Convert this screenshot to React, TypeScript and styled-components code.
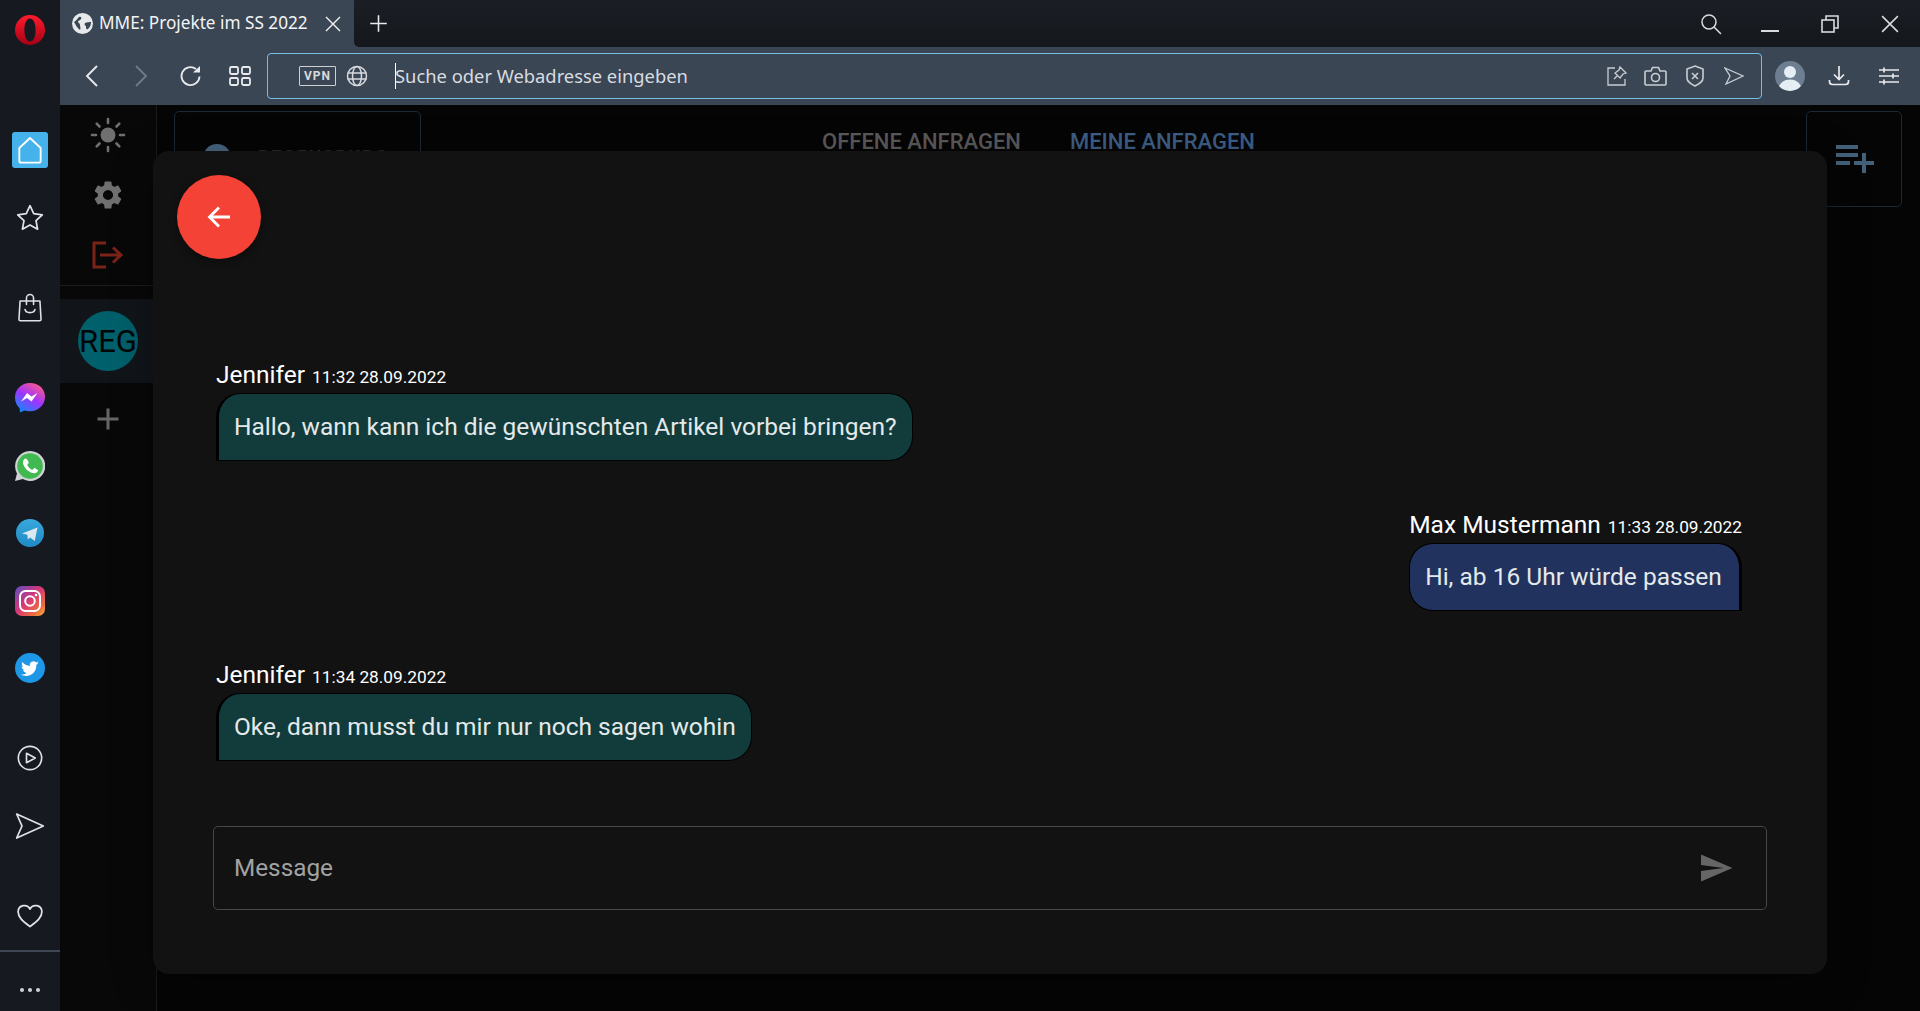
import React from "react";
import styled, { createGlobalStyle } from "styled-components";

const Global = createGlobalStyle`
  html, body { margin: 0; padding: 0; height: 100%; overflow: hidden; background: #060606; }
  #root { height: 100%; }
  * { box-sizing: border-box; }
`;

const Frame = styled.div`
  width: 1920px; height: 1011px; position: relative; overflow: hidden;
  display: grid; grid-template-columns: 60px 1fr; font-family: Roboto, "Liberation Sans", sans-serif;
`;
const OperaRail = styled.aside`
  background: #161a20; display: flex; flex-direction: column; align-items: center; height: 1011px;
`;
const RailSlot = styled.div<{ $h: number; $mt?: number }>`
  height: ${p => p.$h}px; margin-top: ${p => p.$mt ?? 0}px; width: 100%; display: flex; align-items: center; justify-content: center; color: #dfe3e7; flex: none;
`;
const HomeTile = styled.div`
  width: 36px; height: 36px; border-radius: 3px; background: #45b2ec; display: flex; align-items: center; justify-content: center; color: #fff;
`;
const RailFoot = styled.div`
  margin-top: auto; width: 100%; height: 61px; border-top: 2px solid #3e4753; display: flex; justify-content: center; padding-top: 36px; gap: 4px;
`;
const Dot = styled.span`width: 4px; height: 4px; border-radius: 50%; background: #cfd4d9;`;
const Main = styled.main`display: flex; flex-direction: column; min-width: 0;`;
const TabStrip = styled.div`height: 47px; background: #3b4654; display: flex; align-items: stretch; flex: none; color: #e8eaed;`;
const ActiveTab = styled.div`
  width: 294px; display: flex; align-items: center; padding: 0 13px 0 12px; color: #f2f4f6; font-family: "Noto Sans", sans-serif; font-size: 17.2px; gap: 6px;
`;
const TabTitle = styled.span`flex: 1; white-space: nowrap; position: relative; top: -1px;`;
const StripRest = styled.div`flex: 1; display: flex; align-items: stretch; background: linear-gradient(#1b1f25, #14181d); border-radius: 0 0 0 5px;`;
const NewTab = styled.div`width: 48px; display: flex; align-items: center; justify-content: center; margin-right: auto;`;
const WinBtn = styled.div<{ $w: number }>`width: ${p => p.$w}px; display: flex; align-items: center; justify-content: center; color: #d8dbde;`;
const ToolBar = styled.div`height: 58px; background: #3b4654; display: flex; align-items: center; flex: none; padding-left: 8px; color: #e8eaed;`;
const NavBtn = styled.div<{ $w: number; $dim?: boolean; $ml?: number }>`
  width: ${p => p.$w}px; margin-left: ${p => p.$ml ?? 0}px; height: 46px; display: flex; align-items: center; justify-content: center; flex: none; color: ${p => p.$dim ? "#717a85" : "#e8eaed"};
`;
const AddressBar = styled.div`
  width: 1495px; height: 46px; flex: none; margin-left: 4px; border: 1px solid #75bde6; border-radius: 4px; display: flex; align-items: center; padding: 0 8px 0 31px; color: #d6dade;
`;
const VpnTag = styled.span`
  width: 37px; height: 20px; border: 1px solid #ccd0d4; border-radius: 1px; font-size: 12px; font-weight: 700; letter-spacing: 1px; display: flex; align-items: center; justify-content: center; color: #d6dade; margin-right: 10px; flex: none;
`;
const UrlText = styled.div`flex: 1; margin-left: 27px; font-family: "Noto Sans", sans-serif; font-size: 18.35px; color: #d8dce0; border-left: 1px solid #fff; height: 26px; line-height: 26px; white-space: nowrap;
  & > span { margin-left: -1px; }
`;
const AddrIcon = styled.div`width: 39px; display: flex; align-items: center; justify-content: center; color: #c9cdd2;`;
const Avatar = styled.div`
  width: 30px; height: 30px; border-radius: 50%; background: #6d7e91; overflow: hidden; flex: none; margin-left: 13px; display: flex;
`;
const Page = styled.div`flex: 1; display: grid; grid-template-columns: 97px 1fr; min-height: 0; background: #050505;`;
const PageSide = styled.nav`
  background: #080808; border-right: 1px solid #1a1a1a; display: flex; flex-direction: column; align-items: center;
`;
const SideIcon = styled.div<{ $h: number; $c: string }>`
  height: ${p => p.$h}px; width: 100%; display: flex; align-items: center; justify-content: center; color: ${p => p.$c}; flex: none;
`;
const SideRule = styled.div`width: 100%; height: 1px; background: #1c1c1c; margin-bottom: 13px; flex: none;`;
const RegRow = styled.div`width: 100%; height: 84px; background: #11151a; display: flex; align-items: center; justify-content: center; flex: none;`;
const RegBadge = styled.div`
  width: 60px; height: 60px; border-radius: 50%; background: #00606b; color: #020606; font-size: 31px; display: flex; align-items: center; justify-content: center; padding-top: 1px;
`;
const PageBody = styled.div`
  display: grid; grid-template-columns: 247px 1fr 96px; padding: 6px 18px 0 17px; align-items: start;
`;
const GhostCard = styled.div`
  height: 96px; border: 1px solid #1c2833; border-radius: 5px; padding: 32px 28px; display: flex; gap: 27px; background: #050505;
`;
const GhostAvatar = styled.div`width: 28px; height: 28px; border-radius: 50%; background: #47657f; flex: none;`;
const GhostLabel = styled.div`font-size: 18px; line-height: 1; margin-top: 4px; font-weight: 700; letter-spacing: 1.6px; color: #2a2a2a; white-space: nowrap;`;
const Tabs = styled.div`display: flex; justify-content: center; gap: 49px; padding-top: 18px; padding-right: 150px; font-size: 22px; font-weight: 500;`;
const TabLabel = styled.span<{ $on?: boolean }>`color: ${p => p.$on ? "#3d5f86" : "#5a5a5a"}; white-space: nowrap;`;
const GhostButton = styled.div`
  height: 96px; border: 1px solid #1c2833; border-radius: 5px; display: flex; align-items: center; justify-content: center; color: #44617a; padding-left: 2px;
`;

/* Chat dialog: overlays the page */
const Dialog = styled.section`
  position: absolute; left: 153px; top: 151px; width: 1674px; height: 823px; background: #121212; border-radius: 16px;
  box-shadow: 0 10px 40px rgba(0,0,0,.35);
  display: flex; flex-direction: column; padding: 24px 60px 64px;
`;
const BackFab = styled.button`
  width: 84px; height: 84px; border: 0; border-radius: 50%; background: #f44336; color: #fff; display: flex; align-items: center; justify-content: center; padding: 0; flex: none; margin-left: -36px;
  box-shadow: 0 3px 8px rgba(0,0,0,.4);
`;
const Thread = styled.div`flex: 1; display: flex; flex-direction: column; padding-top: 102px;`;
const Msg = styled.div<{ $mine?: boolean; $mt: number }>`
  display: flex; flex-direction: column; align-self: ${p => p.$mine ? "flex-end" : "flex-start"}; margin-top: ${p => p.$mt}px; margin-left: ${p => p.$mine ? 0 : 3}px; margin-right: ${p => p.$mine ? 25 : 0}px;
`;
const MsgHead = styled.div`color: #fff; font-size: 24.5px; line-height: 28px; white-space: nowrap; margin-bottom: 2px;`;
const MsgTime = styled.span`font-size: 17.3px; margin-left: 7px;`;
const Bubble = styled.div<{ $mine?: boolean }>`
  height: 68px; padding: 0 15px 1px; display: flex; align-items: center; font-size: 24.5px; color: #e4e9ea; white-space: nowrap;
  background: ${p => p.$mine ? "#22325f" : "#123b3c"};
  border-radius: ${p => p.$mine ? "24px 24px 0 24px" : "24px 24px 24px 0"};
  border-style: solid; border-color: #000;
  border-width: ${p => p.$mine ? "1px 3px 1px 1px" : "1px 1px 1px 3px"};
`;
const InputBox = styled.div`
  height: 84px; border: 1px solid #474747; border-radius: 5px; display: flex; align-items: center; padding: 0 32px 0 20px; flex: none;
`;
const Placeholder = styled.span`flex: 1; font-size: 24.3px; color: #a2a2a2; position: relative; top: -1px;`;
const SendGlyph = styled.div`color: #666; display: flex;`;

const S = (p: { s?: number; w?: number; c?: React.ReactNode; vb?: string }) => (
  <svg width={p.s ?? 24} height={p.s ?? 24} viewBox={p.vb ?? "0 0 24 24"} fill="none" stroke="currentColor" strokeWidth={p.w ?? 1.5} strokeLinecap="round" strokeLinejoin="round">{p.c}</svg>
);

const Opera = () => (
  <svg width="30" height="30" viewBox="0 0 30 30">
    <defs><linearGradient id="op" x1="0" y1="0" x2="0" y2="1"><stop offset="0" stopColor="#ff1b2d" /><stop offset="1" stopColor="#a70014" /></linearGradient></defs>
    <path fillRule="evenodd" fill="url(#op)" d="M15 0a15 15 0 1 0 0 30 15 15 0 0 0 0-30zm0 3.4c3.6 0 5.6 5.2 5.6 11.6S18.600 26.600 15 26.600 9.400 21.400 9.400 15 11.400 3.400 15 3.400z" />
  </svg>
);

const Globe = () => (
  <svg width="21" height="21" viewBox="0 0 21 21">
    <circle cx="10.500" cy="10.500" r="10.500" fill="#e6e8ea" />
    <path fill="#3b4654" d="M2 9c2-1 3-3 5-5 2-1 3 1 2 2-1 2-3 1-3 3 0 1 2 1 2 3 0 2 1 3 0 5C5 15 4 12 2 9zM13 10c2-1 4-1 6-1 0 3-1 5-3 7-2 1-2-1-2-3-1 0-2-2-1-3z" />
  </svg>
);

const GlobeLine = () => (
  <S s={22} w={1.5} vb="0 0 22 22" c={<>
    <circle cx="11" cy="11" r="9.500" /><ellipse cx="11" cy="11" rx="4.500" ry="9.500" />
    <path d="M2 8h18M2 14h18" />
  </>} />
);

const Home = () => <S s={32} w={1.4} c={<path d="M4 10.500 12 3l8 7.500V20a1.500 1.500 0 0 1-1.500 1.500h-13A1.500 1.500 0 0 1 4 20z" />} />;
const Star = () => <S s={32} w={1.3} c={<path d="M12 2.800l2.800 6 6.400.8-4.700 4.400 1.200 6.400-5.700-3.200-5.700 3.200 1.200-6.400L2.800 9.600l6.400-.8z" />} />;
const Bag = () => <S s={34} w={1.1} c={<>
  <path d="M5 7h14l.8 13a1 1 0 0 1-1 1H5.200a1 1 0 0 1-1-1z" /><path d="M9.500 9.500V5a2.500 2.500 0 0 1 5 0v4.500" /><path d="M8.500 13c.5 3 6.500 3 7 0" />
</>} />;
const Play = () => <S s={28} w={1.4} c={<>
  <circle cx="12" cy="12" r="10" /><path d="M9 8l7.500 4L9 16z" />
</>} />;
const Paper = ({ s = 32, w = 1.3 }: { s?: number; w?: number }) => <S s={s} w={w} c={<path d="M2 3l20 9-20 9 4-9z" />} />;
const Heart = () => <S s={30} w={1.4} c={<path d="M12 20.500C6 16 2.500 13 2.500 8.500A5 5 0 0 1 12 6.500a5 5 0 0 1 9.500 2c0 4.500-3.500 7.500-9.500 12z" />} />;
const Sun = () => (
  <svg width="36" height="36" viewBox="0 0 36 36" fill="none" stroke="#707070" strokeWidth="2.600" strokeLinecap="round">
    <circle cx="18" cy="18" r="7.500" fill="#707070" stroke="none" />
    <path d="M18 2v4M18 30v4M2 18h4M30 18h4M6.700 6.700l2.800 2.800M26.500 26.500l2.800 2.800M6.700 29.300l2.800-2.800M26.500 9.500l2.800-2.800" />
  </svg>
);
const Gear = () => (
  <svg width="34" height="34" viewBox="0 0 24 24" fill="#707070">
    <path d="M19.140 12.940c.04-.3.060-.61.060-.94 0-.32-.02-.64-.07-.94l2.030-1.580a.49.490 0 0 0 .12-.61l-1.920-3.320a.49.490 0 0 0-.59-.22l-2.390.96c-.5-.38-1.030-.7-1.620-.94l-.36-2.540a.48.480 0 0 0-.48-.41h-3.840a.48.480 0 0 0-.47.41l-.36 2.540c-.59.24-1.130.57-1.620.94l-2.390-.96a.48.480 0 0 0-.59.22L2.740 8.870a.48.480 0 0 0 .12.61l2.030 1.580c-.05.3-.09.63-.09.94s.02.640.07.94l-2.030 1.580a.49.490 0 0 0-.12.61l1.920 3.320c.12.22.37.29.59.22l2.390-.96c.5.38 1.030.7 1.620.94l.36 2.540c.05.24.24.41.48.41h3.840c.24 0 .44-.17.47-.41l.36-2.540c.59-.24 1.130-.56 1.620-.94l2.390.96c.22.08.47 0 .59-.22l1.920-3.320a.48.480 0 0 0-.12-.61l-2.010-1.580zM12 15.600A3.610 3.610 0 0 1 8.400 12 3.610 3.610 0 0 1 12 8.400a3.610 3.610 0 0 1 3.600 3.600 3.610 3.610 0 0 1-3.600 3.600z" />
  </svg>
);
const LogOut = () => (
  <svg width="32" height="28" viewBox="0 0 32 28" fill="none" stroke="#7b2318" strokeWidth="3">
    <path d="M14 2H2v24h12" /><path d="M8 14h21M21 6.500l8 7.500-8 7.500" />
  </svg>
);
const Plus = ({ s = 24, w = 2 }: { s?: number; w?: number }) => (
  <svg width={s} height={s} viewBox="0 0 24 24" fill="none" stroke="currentColor" strokeWidth={w}><path d="M12 1.500v21M1.500 12h21" /></svg>
);
const Close = ({ s = 16 }: { s?: number }) => (
  <svg width={s} height={s} viewBox="0 0 16 16" fill="none" stroke="currentColor" strokeWidth="1.400"><path d="M1 1l14 14M15 1L1 15" /></svg>
);
const Playlist = () => (
  <svg width="38" height="28" viewBox="0 0 38 28" fill="currentColor"><rect x="0" y="0" width="22" height="4" /><rect x="0" y="8" width="22" height="4" /><rect x="0" y="16" width="14" height="4" /><rect x="18" y="16" width="20" height="4" /><rect x="26" y="8" width="4" height="20" /></svg>
);

export default function App() {
  return (
    <Frame>
      <Global />
      <OperaRail>
        <RailSlot $h={60}><Opera /></RailSlot>
        <RailSlot $h={36} $mt={72}><HomeTile><Home /></HomeTile></RailSlot>
        <RailSlot $h={28} $mt={36}><Star /></RailSlot>
        <RailSlot $h={30} $mt={61}><Bag /></RailSlot>
        <RailSlot $h={30} $mt={60}>
          <svg width="30" height="30" viewBox="0 0 30 30"><defs><linearGradient id="ms" x1="0.200" y1="1" x2="0.800" y2="0"><stop offset="0" stopColor="#0a8cff" /><stop offset=".5" stopColor="#a033ff" /><stop offset="1" stopColor="#ff5c87" /></linearGradient></defs><path fill="url(#ms)" d="M15 0C6.500 0 0 6.200 0 14.500c0 4.300 1.800 8.100 4.600 10.700l.4 4.300 4.400-2c1.700.5 3.600.8 5.600.8 8.500 0 15-6.200 15-14.500S23.500 0 15 0z" /><path fill="#fff" d="M6 18.500l6-8.500 4.500 3.500 6-3.500-6 8.500-4.500-3.500z" /></svg>
        </RailSlot>
        <RailSlot $h={30} $mt={38}>
          <svg width="30" height="30" viewBox="0 0 30 30"><path fill="#cfd3d6" d="M15 0a15 15 0 0 0-13 22.400L0 30l7.800-2A15 15 0 1 0 15 0z" /><circle cx="15" cy="15" r="12.800" fill="#3fb950" /><path fill="#fff" d="M10.500 7.500c-.8 0-2.500 1.500-2.500 3.800 0 5 6 11 11.500 11 2 0 3.500-1.800 3.500-3 0-.6-3-2.400-3.600-2.400-.7 0-1.300 1.800-2 1.800-1.500 0-5-3.500-5-4.800 0-.8 1.400-1.400 1.400-2.100s-1.600-4.300-3.300-4.300z" /></svg>
        </RailSlot>
        <RailSlot $h={28} $mt={38}>
          <svg width="28" height="28" viewBox="0 0 28 28"><defs><linearGradient id="tg" x1="0" y1="0" x2="0" y2="1"><stop offset="0" stopColor="#38a8dd" /><stop offset="1" stopColor="#1f8ac4" /></linearGradient></defs><circle cx="14" cy="14" r="14" fill="url(#tg)" /><path fill="#dbe9f2" d="M6 14.500 21.500 8.500l-2.800 13.500-4.600-3.600-2.300 2.100-.5-4.800z" /></svg>
        </RailSlot>
        <RailSlot $h={30} $mt={39}>
          <svg width="30" height="30" viewBox="0 0 30 30"><defs><linearGradient id="ig" x1="0" y1="0" x2="1" y2="1"><stop offset="0" stopColor="#5b4fc4" /><stop offset=".45" stopColor="#d6367a" /><stop offset=".8" stopColor="#ee6f3b" /><stop offset="1" stopColor="#f6b945" /></linearGradient></defs><rect width="30" height="30" rx="7" fill="url(#ig)" /><rect x="5" y="5" width="20" height="20" rx="5.500" fill="none" stroke="#fff" strokeWidth="2" /><circle cx="15" cy="15" r="4.800" fill="none" stroke="#fff" strokeWidth="2" /><circle cx="21" cy="9" r="1.300" fill="#fff" /></svg>
        </RailSlot>
        <RailSlot $h={30} $mt={37}>
          <svg width="30" height="30" viewBox="0 0 30 30"><circle cx="15" cy="15" r="15" fill="#1d97e6" /><path fill="#fff" d="M24 10c-.7.300-1.400.5-2.100.6.800-.5 1.300-1.200 1.600-2-.7.400-1.500.7-2.300.9a3.700 3.700 0 0 0-6.300 3.400c-3.100-.2-5.800-1.600-7.600-3.900-1 1.700-.5 3.900 1.100 5-.6 0-1.200-.2-1.700-.5 0 1.800 1.300 3.300 3 3.700-.5.100-1.100.2-1.700.1.500 1.500 1.900 2.500 3.500 2.600-1.600 1.200-3.600 1.800-5.500 1.600 6 3.600 15.400.6 15.400-9.700.8-.6 1.500-1.100 2-1.800z" /></svg>
        </RailSlot>
        <RailSlot $h={26} $mt={62}><Play /></RailSlot>
        <RailSlot $h={30} $mt={40}><Paper /></RailSlot>
        <RailSlot $h={26} $mt={62}><Heart /></RailSlot>
        <RailFoot><Dot /><Dot /><Dot /></RailFoot>
      </OperaRail>
      <Main>
        <TabStrip>
          <ActiveTab>
            <Globe />
            <TabTitle>MME: Projekte im SS 2022</TabTitle>
            <Close />
          </ActiveTab>
          <StripRest>
            <NewTab><Plus s={19} w={2} /></NewTab>
            <WinBtn $w={58}><S s={24} w={1.5} c={<><circle cx="10" cy="10" r="7" /><path d="M15 15l6.500 6.500" /></>} /></WinBtn>
            <WinBtn $w={60}><svg width="18" height="18" viewBox="0 0 18 18" stroke="currentColor" strokeWidth="2"><path d="M0 16h18" /></svg></WinBtn>
            <WinBtn $w={60}><svg width="18" height="18" viewBox="0 0 18 18" fill="none" stroke="currentColor" strokeWidth="1.600"><rect x="1" y="5" width="12" height="12" /><path d="M5 5V1h12v12h-4" /></svg></WinBtn>
            <WinBtn $w={60}><Close s={18} /></WinBtn>
          </StripRest>
        </TabStrip>
        <ToolBar>
          <NavBtn $w={48}><svg width="14" height="24" viewBox="0 0 14 24" fill="none" stroke="currentColor" strokeWidth="1.900"><path d="M12 2 2 12l10 10" /></svg></NavBtn>
          <NavBtn $w={49} $dim><svg width="14" height="24" viewBox="0 0 14 24" fill="none" stroke="currentColor" strokeWidth="1.900"><path d="M2 2l10 10-10 10" /></svg></NavBtn>
          <NavBtn $w={52}><svg width="24" height="24" viewBox="0 0 24 24" fill="none" stroke="currentColor" strokeWidth="1.800"><path d="M20.500 12.500A9 9 0 1 1 17 5" /><path d="M14 8.500h7V2z" fill="currentColor" stroke="none" /></svg></NavBtn>
          <NavBtn $w={46}><svg width="24" height="22" viewBox="0 0 24 22" fill="none" stroke="currentColor" strokeWidth="1.800"><rect x="2" y="2" width="8" height="7" rx="1.500" /><rect x="14" y="2" width="8" height="7" rx="1.500" /><rect x="2" y="13" width="8" height="7" rx="1.500" /><rect x="14" y="13" width="8" height="7" rx="1.500" /></svg></NavBtn>
          <AddressBar>
            <VpnTag>VPN</VpnTag>
            <GlobeLine />
            <UrlText><span>Suche oder Webadresse eingeben</span></UrlText>
            <AddrIcon><svg width="22" height="22" viewBox="0 0 22 22" fill="none" stroke="currentColor" strokeWidth="1.300"><path d="M9 3H2v17h17v-6" /><path d="M14 2l6 6-3 1-3 4-5-5 4-3zM8 14l3-3" /></svg></AddrIcon>
            <AddrIcon><svg width="23" height="20" viewBox="0 0 23 20" fill="none" stroke="currentColor" strokeWidth="1.600"><path d="M2 5h5l1.500-3.500h6L16 5h5a1 1 0 0 1 1 1v12a1 1 0 0 1-1 1H2a1 1 0 0 1-1-1V6a1 1 0 0 1 1-1z" /><circle cx="11.500" cy="11.500" r="4" /></svg></AddrIcon>
            <AddrIcon><svg width="20" height="22" viewBox="0 0 20 22" fill="none" stroke="currentColor" strokeWidth="1.600"><path d="M10 1l8 3v9c0 4-4 6-8 8-4-2-8-4-8-8V4z" /><path d="M7 8l6 6M13 8l-6 6" /></svg></AddrIcon>
            <AddrIcon><svg width="20" height="18" viewBox="0 0 20 18" fill="none" stroke="currentColor" strokeWidth="1.300"><path d="M1 1l18 8-17 8 4-8z" /></svg></AddrIcon>
          </AddressBar>
          <Avatar><svg width="30" height="30" viewBox="0 0 30 30"><circle cx="15" cy="11" r="6" fill="#e6eef5" /><ellipse cx="15" cy="27" rx="11" ry="8.500" fill="#e6eef5" /></svg></Avatar>
          <NavBtn $w={50} $ml={9}><svg width="22" height="22" viewBox="0 0 22 22" fill="none" stroke="currentColor" strokeWidth="1.700"><path d="M11 1v13M6 9.500l5 5 5-5" /><path d="M1.500 15v1.500c0 2 1 3 3 3h13c2 0 3-1 3-3V15" /></svg></NavBtn>
          <NavBtn $w={50}><svg width="22" height="20" viewBox="0 0 22 20" fill="none" stroke="currentColor" strokeWidth="1.700"><path d="M1 4h20M1 10h20M1 16h20M6 1.500v5M15 7.500v5M6 13.500v5" /></svg></NavBtn>
        </ToolBar>
        <Page>
          <PageSide>
            <SideIcon $h={60} $c="#707070"><Sun /></SideIcon>
            <SideIcon $h={60} $c="#707070"><Gear /></SideIcon>
            <SideIcon $h={60} $c="#7b2318"><LogOut /></SideIcon>
            <SideRule />
            <RegRow><RegBadge>REG</RegBadge></RegRow>
            <SideIcon $h={72} $c="#666"><Plus s={24} w={3} /></SideIcon>
          </PageSide>
          <PageBody>
            <GhostCard><GhostAvatar /><GhostLabel>REGENSBURG</GhostLabel></GhostCard>
            <Tabs><TabLabel>OFFENE ANFRAGEN</TabLabel><TabLabel $on>MEINE ANFRAGEN</TabLabel></Tabs>
            <GhostButton><Playlist /></GhostButton>
          </PageBody>
        </Page>
      </Main>
      <Dialog>
        <BackFab><svg width="30" height="30" viewBox="0 0 30 30" fill="none" stroke="currentColor" strokeWidth="2.800"><path d="M26 15H6M15 5.500 5.500 15l9.500 9.500" /></svg></BackFab>
        <Thread>
          <Msg $mt={0}><MsgHead>Jennifer<MsgTime>11:32 28.09.2022</MsgTime></MsgHead><Bubble>Hallo, wann kann ich die gewünschten Artikel vorbei bringen?</Bubble></Msg>
          <Msg $mine $mt={50}><MsgHead>Max Mustermann<MsgTime>11:33 28.09.2022</MsgTime></MsgHead><Bubble $mine>Hi, ab 16 Uhr würde passen</Bubble></Msg>
          <Msg $mt={50}><MsgHead>Jennifer<MsgTime>11:34 28.09.2022</MsgTime></MsgHead><Bubble>Oke, dann musst du mir nur noch sagen wohin</Bubble></Msg>
        </Thread>
        <InputBox>
          <Placeholder>Message</Placeholder>
          <SendGlyph><svg width="36" height="36" viewBox="0 0 24 24" fill="currentColor"><path d="M2.010 21 23 12 2.010 3 2 10l15 2-15 2z" /></svg></SendGlyph>
        </InputBox>
      </Dialog>
    </Frame>
  );
}
